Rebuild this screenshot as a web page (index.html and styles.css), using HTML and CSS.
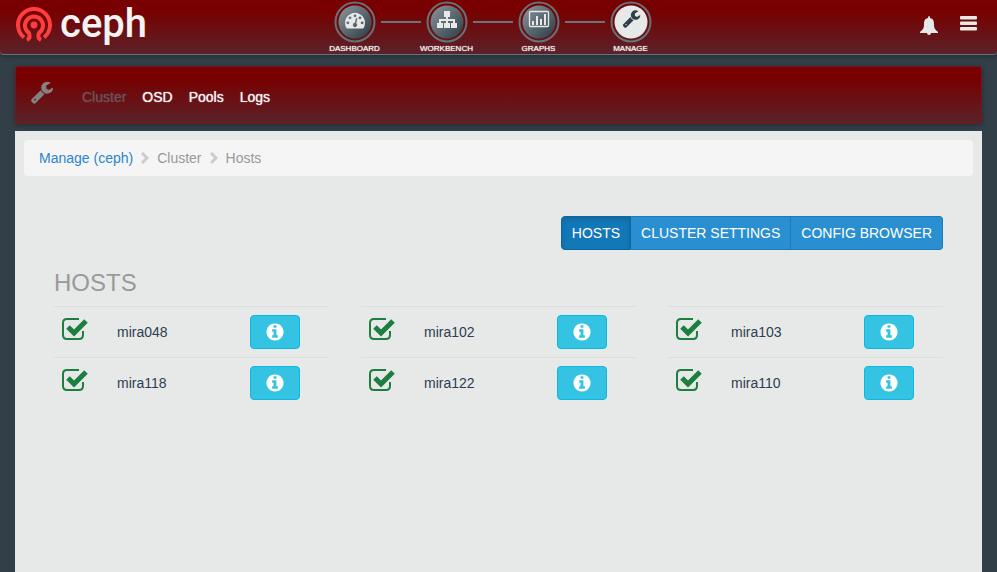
FILE: index.html
```html
<!DOCTYPE html>
<html lang="en">
<head>
<meta charset="utf-8">
<title>Ceph - Hosts</title>
<link rel="stylesheet" href="styles.css">
</head>
<body>
<svg class="sprite" aria-hidden="true">
  <linearGradient id="steel" x1="0" y1="0" x2="1" y2="1"><stop offset="0" stop-color="#8c979d"/><stop offset="1" stop-color="#2b3b44"/></linearGradient>
  <symbol id="wrench" viewBox="0 0 1792 1792"><path d="M448 1472q0-26-19-45t-45-19-45 19-19 45 19 45 45 19 45-19 19-45zm644-420l-682 682q-37 37-90 37-52 0-91-37l-106-108q-38-36-38-90 0-53 38-91l681-681q39 98 114.500 173.500t173.500 114.500zm634-435q0 39-23 106-47 134-164.500 217.500t-258.500 83.500q-185 0-316.500-131.500t-131.500-316.500 131.500-316.500 316.500-131.500q58 0 121.500 16.500t107.500 46.500q16 11 16 28t-16 28l-293 169v224l193 107q5-3 79-48.500t135.500-81 70.500-35.500q15 0 23.500 10t8.500 25z"/></symbol>
  <symbol id="gauge" viewBox="0 0 1792 1792"><path d="M384 1152q0-53-37.500-90.500t-90.500-37.500-90.500 37.500-37.500 90.500 37.500 90.500 90.500 37.500 90.500-37.500 37.500-90.500zm192-448q0-53-37.500-90.500t-90.500-37.500-90.500 37.500-37.500 90.500 37.500 90.500 90.500 37.500 90.500-37.500 37.500-90.500zm428 481l101-382q6-26-7.500-48.500t-38.500-29.500-48 6.500-30 39.500l-101 382q-60 5-107 43.500t-63 98.500q-20 77 20 146t117 89 146-20 89-117q16-60-6-117t-72-91zm660-33q0-53-37.500-90.500t-90.500-37.500-90.500 37.500-37.500 90.500 37.500 90.500 90.500 37.500 90.500-37.500 37.500-90.500zm-640-640q0-53-37.500-90.500t-90.500-37.500-90.500 37.500-37.500 90.500 37.500 90.500 90.500 37.500 90.500-37.500 37.500-90.500zm448 192q0-53-37.500-90.500t-90.500-37.500-90.500 37.500-37.500 90.500 37.500 90.500 90.500 37.500 90.500-37.500 37.500-90.500zm320 448q0 261-141 483-19 29-54 29h-1402q-35 0-54-29-141-221-141-483 0-182 71-348t191-286 286-191 348-71 348 71 286 191 191 286 71 348z"/></symbol>
  <symbol id="info" viewBox="0 0 1792 1792"><path d="M1152 1376v-160q0-14-9-23t-23-9h-96v-512q0-14-9-23t-23-9h-320q-14 0-23 9t-9 23v160q0 14 9 23t23 9h96v320h-96q-14 0-23 9t-9 23v160q0 14 9 23t23 9h448q14 0 23-9t9-23zm-128-896v-160q0-14-9-23t-23-9h-192q-14 0-23 9t-9 23v160q0 14 9 23t23 9h192q14 0 23-9t9-23zm640 416q0 209-103 385.500t-279.500 279.500-385.500 103-385.500-103-279.500-279.500-103-385.500 103-385.500 279.500-279.500 385.500-103 385.500 103 279.500 279.500 103 385.500z"/></symbol>
  <symbol id="check" viewBox="0 0 28 24"><path d="M18 2H6Q2 2 2 6v12q0 4 4 4h12q4 0 4-4v-4" fill="none" stroke="currentColor" stroke-width="2"/><path d="M7 10l6 6L25 4" fill="none" stroke="currentColor" stroke-width="5"/></symbol>
  <symbol id="chevron" viewBox="0 0 8 12"><path d="M1 1l5 5-5 5" fill="none" stroke="currentColor" stroke-width="3"/></symbol>
</svg>

<header class="topbar">
  <a class="brand" href="#">
    <svg class="brand-mark" viewBox="0 0 36 36" aria-hidden="true">
      <g fill="none" stroke="#ff3e3e" stroke-width="4">
        <path d="M8 30.500A16 16 0 1 1 28 30.500"/>
        <path d="M11 33Q15 31 13 26A9 9 0 1 1 23 26Q21 31 25 33"/>
      </g>
      <circle cx="18" cy="18" r="3.400" fill="#ff3e3e"/>
    </svg>
    <span class="brand-name">ceph</span>
  </a>
  <nav class="main-nav" aria-label="Main">
    <a class="nav-item" href="#">
      <svg class="nav-icon" viewBox="0 0 42 42" aria-hidden="true"><circle class="ring" cx="21" cy="21" r="19.500"/><circle cx="21" cy="21" r="16.500" fill="url(#steel)"/><use href="#gauge" x="11" y="9" width="20" height="20"/></svg>
      <span>DASHBOARD</span>
    </a>
    <a class="nav-item" href="#">
      <svg class="nav-icon" viewBox="0 0 42 42" aria-hidden="true"><circle class="ring" cx="21" cy="21" r="19.500"/><circle cx="21" cy="21" r="16.500" fill="url(#steel)"/><path d="M18 10h6v6h-2v2h7v4h2v5h-6v-5h2v-2h-5v2h2v5h-6v-5h2v-2h-5v2h2v5h-6v-5h2v-4h7v-2h-2z"/></svg>
      <span>WORKBENCH</span>
    </a>
    <a class="nav-item" href="#">
      <svg class="nav-icon" viewBox="0 0 42 42" aria-hidden="true"><circle class="ring" cx="21" cy="21" r="19.500"/><circle cx="21" cy="21" r="16.500" fill="url(#steel)"/><rect x="11.500" y="10.500" width="19" height="15" rx="1" fill="none" stroke="#e7e9e8" stroke-width="1.300"/><path d="M14 20h2v4h-2zM18 15h2v9h-2zM22 18h2v6h-2zM26 13h2v11h-2z"/></svg>
      <span>GRAPHS</span>
    </a>
    <a class="nav-item current" href="#" aria-current="page">
      <svg class="nav-icon" viewBox="0 0 42 42" aria-hidden="true"><circle class="ring" cx="21" cy="21" r="19.500"/><circle cx="21" cy="21" r="16.500"/><use href="#wrench" x="12" y="8" width="19" height="19" fill="#2f3e48"/></svg>
      <span>MANAGE</span>
    </a>
  </nav>
  <div class="actions">
    <button class="icon-button" type="button" aria-label="Notifications">
      <svg width="18" height="20" viewBox="0 0 18 20"><path d="M9 0q1 0 1 2c4 1 4 4 4 7 0 4 2 5 4 7v1h-7a2 2 0 0 1-4 0H0v-1c2-2 4-3 4-7 0-3 0-6 4-7q0-2 1-2z"/></svg>
    </button>
    <button class="icon-button" type="button" aria-label="Menu">
      <svg width="17" height="16" viewBox="0 0 17 16"><rect width="17" height="3.500" rx="1"/><rect y="5.500" width="17" height="3.500" rx="1"/><rect y="11" width="17" height="3.500" rx="1"/></svg>
    </button>
  </div>
</header>

<div class="page">
  <nav class="subnav" aria-label="Manage">
    <svg class="subnav-icon" aria-hidden="true"><use href="#wrench"/></svg>
    <a class="current" href="#" aria-current="page">Cluster</a>
    <a href="#">OSD</a>
    <a href="#">Pools</a>
    <a href="#">Logs</a>
  </nav>

  <main class="panel">
    <nav class="breadcrumb" aria-label="Breadcrumb">
      <a href="#">Manage (ceph)</a>
      <svg class="chevron" aria-hidden="true"><use href="#chevron"/></svg>
      <span>Cluster</span>
      <svg class="chevron" aria-hidden="true"><use href="#chevron"/></svg>
      <span>Hosts</span>
    </nav>
    <section class="content">
      <div class="tabs">
        <button class="active" type="button">HOSTS</button>
        <button type="button">CLUSTER SETTINGS</button>
        <button type="button">CONFIG BROWSER</button>
      </div>
      <h1>HOSTS</h1>
      <ul class="hosts">
        <li><svg class="check" role="img" aria-label="OK"><use href="#check"/></svg><span>mira048</span><button class="info" type="button" aria-label="Info"><svg><use href="#info"/></svg></button></li>
        <li><svg class="check" role="img" aria-label="OK"><use href="#check"/></svg><span>mira102</span><button class="info" type="button" aria-label="Info"><svg><use href="#info"/></svg></button></li>
        <li><svg class="check" role="img" aria-label="OK"><use href="#check"/></svg><span>mira103</span><button class="info" type="button" aria-label="Info"><svg><use href="#info"/></svg></button></li>
        <li><svg class="check" role="img" aria-label="OK"><use href="#check"/></svg><span>mira118</span><button class="info" type="button" aria-label="Info"><svg><use href="#info"/></svg></button></li>
        <li><svg class="check" role="img" aria-label="OK"><use href="#check"/></svg><span>mira122</span><button class="info" type="button" aria-label="Info"><svg><use href="#info"/></svg></button></li>
        <li><svg class="check" role="img" aria-label="OK"><use href="#check"/></svg><span>mira110</span><button class="info" type="button" aria-label="Info"><svg><use href="#info"/></svg></button></li>
      </ul>
    </section>
  </main>
</div>
</body>
</html>
```

FILE: styles.css
```css
* {
  box-sizing: border-box;
}

body {
  display: flex;
  flex-direction: column;
  min-height: 100vh;
  margin: 0;
  background: #333f48;
  color: #2c3e50;
  font-family: "Liberation Sans", Arial, sans-serif;
  font-size: 14px;
  line-height: 20px;
}

a {
  text-decoration: none;
}

button {
  font: inherit;
  cursor: pointer;
}

svg {
  display: block;
  fill: currentColor;
}

.sprite {
  position: absolute;
  width: 0;
  height: 0;
}

.topbar,
.subnav {
  background: linear-gradient(#780000 20%, #5a2229);
  box-shadow: 0 1px 4px #1f2a31;
}

.topbar {
  display: grid;
  grid-template-columns: 1fr auto 1fr;
  padding: 0 20px 0 8px;
  border-bottom: 1px solid #68747b;
  border-radius: 0 0 4px 4px;
}

.brand {
  display: flex;
  gap: 8px;
  padding: 7px 0 0 8px;
  color: #f3f3f3;
}

.brand-mark {
  width: 36px;
  height: 36px;
}

.brand-name {
  font-family: Roboto, sans-serif;
  font-size: 40px;
  font-weight: 500;
  line-height: 34px;
}

.main-nav {
  display: grid;
  grid-template-columns: repeat(4, 92px);
}

.nav-item {
  position: relative;
  display: flex;
  flex-direction: column;
  align-items: center;
  padding-top: 1px;
  color: #f3f3f3;
  font-size: 8px;
  line-height: 11px;
  text-shadow: 0 0 1px #f3f3f3;
}

.nav-item + .nav-item::before {
  position: absolute;
  top: 21px;
  left: -20px;
  width: 40px;
  height: 2px;
  background: #69757b;
  content: "";
}

.nav-icon {
  width: 42px;
  height: 42px;
  fill: #e7e9e8;
}

.ring {
  fill: none;
  stroke: #64737b;
  stroke-width: 2;
}

.actions {
  display: flex;
  justify-content: flex-end;
  align-items: flex-start;
  gap: 22px;
  padding-top: 16px;
}

.icon-button {
  padding: 0;
  border: 0;
  background: none;
  color: #e7e9e8;
}

.page {
  display: flex;
  flex: 1;
  flex-direction: column;
  gap: 7px;
  padding: 11px 15px 0;
}

.subnav {
  display: flex;
  align-items: flex-end;
  gap: 16px;
  padding: 13px 16px 15px;
  border: 1px solid #741820;
  border-radius: 3px;
}

.subnav a {
  color: #f3f3f3;
  line-height: 22px;
  text-shadow: 0 0 1px currentColor;
}

.subnav .current {
  color: #695358;
}

.subnav-icon {
  width: 24px;
  height: 24px;
  margin: 0 12px 4px -2px;
  color: #858081;
}

.panel {
  flex: 1;
  padding: 9px;
  background: #e7e9e8;
}

.breadcrumb {
  display: flex;
  align-items: center;
  gap: 8px;
  padding: 8px 15px;
  border-radius: 4px;
  background: #f5f5f5;
  color: #999;
}

.breadcrumb a {
  color: #2a85cc;
}

.chevron {
  width: 8px;
  height: 12px;
  color: #ccc;
}

.content {
  padding: 40px 30px;
}

.tabs {
  display: flex;
  justify-content: flex-end;
}

.tabs button {
  padding: 6px 10px;
  border: 1px solid #1a7cbc;
  border-left-width: 0;
  background: #298fd0;
  color: #fff;
}

.tabs button:first-child {
  border-left-width: 1px;
  border-radius: 4px 0 0 4px;
}

.tabs button:last-child {
  border-radius: 0 4px 4px 0;
}

.tabs .active {
  border-color: #0d65a0;
  background: #1278b8;
  box-shadow: inset 0 3px 5px rgba(0, 0, 0, 0.125);
}

h1 {
  margin: 18px 0 9px;
  color: #999;
  font-size: 24px;
  font-weight: 400;
  line-height: 29px;
}

.hosts {
  display: grid;
  grid-template-columns: repeat(3, 1fr);
  column-gap: 32px;
  margin: 0;
  padding: 0;
  list-style: none;
}

.hosts li {
  display: grid;
  grid-template-columns: 55px 1fr 79px;
  align-items: center;
  padding: 8px 0 8px 8px;
  border-top: 1px solid #dcdfdf;
}

.check {
  width: 28px;
  height: 24px;
  margin: -6px 0 0 -1px;
  color: #1c7e3f;
}

.info {
  display: flex;
  align-items: center;
  justify-content: center;
  width: 50px;
  height: 34px;
  padding: 0;
  border: 1px solid #0bb9de;
  border-radius: 4px;
  background: #34c3e2;
  color: #fff;
}

.info svg {
  width: 20px;
  height: 20px;
}
```
